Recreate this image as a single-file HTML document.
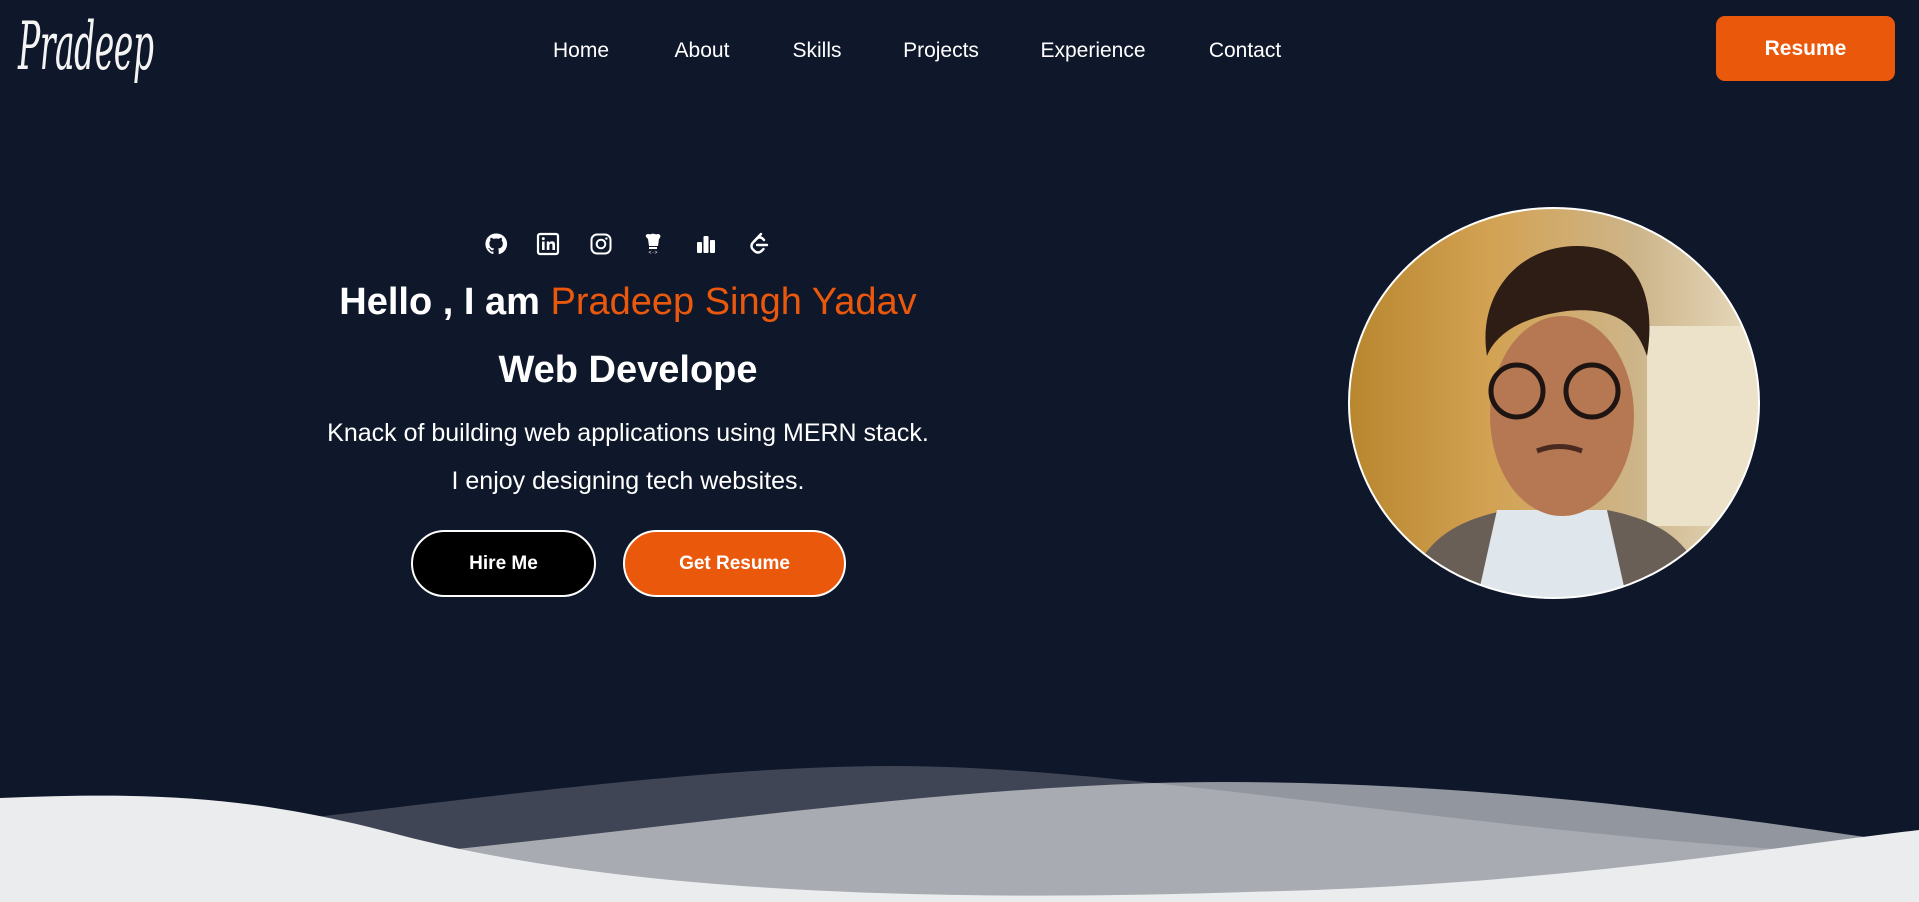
<!DOCTYPE html>
<html><head><meta charset="utf-8"><style>
*{margin:0;padding:0;box-sizing:border-box}
body{width:1919px;height:902px;background:#0f172a;overflow:hidden;position:relative;font-family:"Liberation Sans",sans-serif;color:#fff}
.logo{position:absolute;left:18px;top:8px;font-family:"DejaVu Serif","Liberation Serif",serif;font-style:italic;font-size:66px;letter-spacing:-1px;transform:scaleX(.5);transform-origin:left top;color:#f4f4f4}
.nav a{position:absolute;top:39px;font-size:21px;color:#fff;text-decoration:none;transform:translateX(-50%)}
.rbtn{position:absolute;left:1716px;top:16px;width:179px;height:65px;background:#ea580c;border-radius:9px;font-weight:bold;font-size:21px;display:flex;align-items:center;justify-content:center}
.icons svg{position:absolute;top:232px;width:24px;height:24px}
.c{position:absolute;left:0;width:1256px;text-align:center}
h1{font-size:38px;font-weight:bold}
.o{color:#ea580c;font-weight:normal}
p{font-size:25px}
.btn{position:absolute;top:530px;height:67px;border:2px solid #fff;border-radius:34px;font-weight:bold;font-size:19px;display:flex;align-items:center;justify-content:center}
</style></head><body>
<div class="logo">Pradeep</div>
<div class="nav"><a style="left:581px">Home</a><a style="left:702px">About</a><a style="left:817px">Skills</a><a style="left:941px">Projects</a><a style="left:1093px">Experience</a><a style="left:1245px">Contact</a></div>
<div class="rbtn">Resume</div>
<div class="icons">
<svg style="left:484px" viewBox="0 0 24 24"><path fill="#fff" d="M12 1.5a10.5 10.5 0 0 0-3.3 20.5c.5.1.7-.2.7-.5v-2c-2.9.6-3.5-1.3-3.5-1.3-.5-1.2-1.2-1.5-1.2-1.5-1-.7.1-.7.1-.7 1 .1 1.6 1.1 1.6 1.1.9 1.6 2.5 1.1 3.1.9.1-.7.4-1.1.7-1.4-2.3-.3-4.8-1.2-4.8-5.2 0-1.1.4-2.1 1.1-2.8-.1-.3-.5-1.3.1-2.8 0 0 .9-.3 2.9 1.1a10 10 0 0 1 5.2 0c2-1.4 2.9-1.1 2.9-1.1.6 1.5.2 2.5.1 2.8.7.7 1.1 1.7 1.1 2.8 0 4-2.5 4.9-4.8 5.2.4.3.7 1 .7 2v3c0 .3.2.6.7.5A10.5 10.5 0 0 0 12 1.5z"/></svg>
<svg style="left:536px" viewBox="0 0 24 24"><rect x="2" y="2" width="20" height="20" rx="2" fill="none" stroke="#fff" stroke-width="2.2"/><rect x="6" y="9.5" width="2.6" height="8.5" fill="#fff"/><circle cx="7.3" cy="6.6" r="1.5" fill="#fff"/><path d="M10.8 9.5h2.5v1.3c.5-.9 1.5-1.5 2.8-1.5 2.2 0 2.9 1.4 2.9 3.6V18h-2.6v-4.6c0-1.1-.3-1.8-1.3-1.8s-1.7.7-1.7 1.9V18h-2.6z" fill="#fff"/></svg>
<svg style="left:589px" viewBox="0 0 24 24"><rect x="2.5" y="2.5" width="19" height="19" rx="5.5" fill="none" stroke="#fff" stroke-width="2"/><circle cx="12" cy="12" r="4.3" fill="none" stroke="#fff" stroke-width="2"/><circle cx="17.4" cy="6.6" r="1.2" fill="#fff"/></svg>
<svg style="left:641px" viewBox="0 0 24 24"><path fill="#fff" d="M5 3c1.5-1.5 3-1 4-.5 1-1 5-1 6 0 1-.5 2.5-1 4 .5 1 1.2 0 3-1 4l-1 7H8L7 7C6 6 4 4.2 5 3z"/><rect x="8" y="15" width="8" height="2" fill="#fff"/><text x="12" y="22" font-size="5" fill="#fff" text-anchor="middle" font-family="Liberation Mono">&lt;·&gt;</text></svg>
<svg style="left:694px" viewBox="0 0 24 24"><rect x="3" y="10" width="5" height="11" rx="1" fill="#fff"/><rect x="9.5" y="4" width="5" height="17" rx="1" fill="#fff"/><rect x="16" y="8" width="5" height="13" rx="1" fill="#fff"/></svg>
<svg style="left:747px" viewBox="0 0 24 24"><path d="M14 2 6 10.5c-2 2-2 5 0 7l1.5 1.5c2 2 5 2 7 0l2-2" fill="none" stroke="#fff" stroke-width="2.4" stroke-linecap="round"/><path d="M10 13h10" stroke="#fff" stroke-width="2.4" stroke-linecap="round"/><path d="M7.5 9l2.5-2.5c1.5-1.5 4-1.5 5.5 0l1.5 1.5" fill="none" stroke="#fff" stroke-width="2.4" stroke-linecap="round"/></svg>
</div>
<div class="c" style="top:281px"><h1>Hello , I am <span class="o">Pradeep Singh Yadav</span></h1></div>
<div class="c" style="top:349px"><h1>Web Develope</h1></div>
<div class="c" style="top:419px"><p>Knack of building web applications using MERN stack.</p></div>
<div class="c" style="top:467px"><p>I enjoy designing tech websites.</p></div>
<div class="btn" style="left:411px;width:185px;background:#000">Hire Me</div>
<div class="btn" style="left:623px;width:223px;background:#ea580c">Get Resume</div>
<svg style="position:absolute;left:1347px;top:206px" width="414" height="394" viewBox="0 0 414 394">
<defs><clipPath id="cp"><ellipse cx="207" cy="197" rx="205" ry="195"/></clipPath>
<linearGradient id="bg" x1="0" x2="1"><stop offset="0" stop-color="#b8862e"/><stop offset=".35" stop-color="#d3a253"/><stop offset=".7" stop-color="#cdb58a"/><stop offset="1" stop-color="#e8dcc0"/></linearGradient></defs>
<g clip-path="url(#cp)">
<rect width="414" height="394" fill="url(#bg)"/>
<rect x="300" y="120" width="114" height="200" fill="#ece2c9"/>
<path d="M60 394c10-60 50-80 100-90h100c50 10 90 30 100 90z" fill="#6a5f57"/>
<path d="M130 394l20-90h110l20 90z" fill="#dfe6ec"/>
<ellipse cx="215" cy="210" rx="72" ry="100" fill="#b57852"/>
<path d="M140 150c-10-60 30-110 90-110 60 0 80 50 70 110-10-30-30-50-80-45-40 5-70 20-80 45z" fill="#2e1d14"/>
<circle cx="170" cy="185" r="26" fill="none" stroke="#1e1412" stroke-width="5"/><circle cx="245" cy="185" r="26" fill="none" stroke="#1e1412" stroke-width="5"/>
<path d="M190 245c15-6 30-6 45 0" stroke="#4a2a20" stroke-width="5" fill="none"/>
</g>
<ellipse cx="207" cy="197" rx="205" ry="195" fill="none" stroke="#fff" stroke-width="2"/>
</svg>
<svg style="position:absolute;left:0;top:740px" width="1919" height="162" viewBox="0 0 1919 162">
<path d="M0 110C350 80 650 26 893 26 1150 26 1500 100 1919 117V162H0z" fill="#fff" fill-opacity=".2"/>
<path d="M0 137C400 140 850 42 1224 42 1500 42 1750 80 1919 105V162H0z" fill="#fff" fill-opacity=".55"/>
<path d="M0 58C150 52 250 55 400 95 650 160 1000 160 1248 152 1550 145 1750 110 1919 90V162H0z" fill="#ebeced"/>
</svg>
</body></html>
